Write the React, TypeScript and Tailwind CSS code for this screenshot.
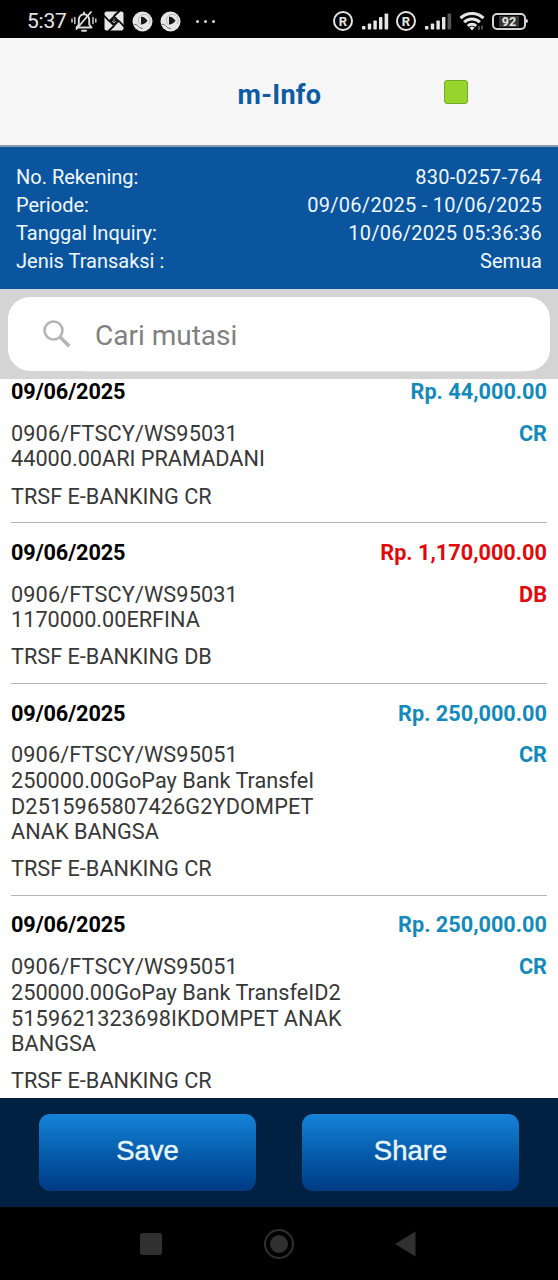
import React from "react";

type Mutasi = {
    date: string;
    amount: string;
    type: "CR" | "DB";
    lines: string[];
    note: string;
};

const info = [
    { label: "No. Rekening:", value: "830-0257-764" },
    { label: "Periode:", value: "09/06/2025 - 10/06/2025" },
    { label: "Tanggal Inquiry:", value: "10/06/2025 05:36:36" },
    { label: "Jenis Transaksi :", value: "Semua" },
];

const mutasi: Mutasi[] = [
    {
        date: "09/06/2025",
        amount: "Rp. 44,000.00",
        type: "CR",
        lines: ["0906/FTSCY/WS95031", "44000.00ARI PRAMADANI"],
        note: "TRSF E-BANKING CR",
    },
    {
        date: "09/06/2025",
        amount: "Rp. 1,170,000.00",
        type: "DB",
        lines: ["0906/FTSCY/WS95031", "1170000.00ERFINA"],
        note: "TRSF E-BANKING DB",
    },
    {
        date: "09/06/2025",
        amount: "Rp. 250,000.00",
        type: "CR",
        lines: ["0906/FTSCY/WS95051", "250000.00GoPay Bank TransfeI", "D2515965807426G2YDOMPET", "ANAK BANGSA"],
        note: "TRSF E-BANKING CR",
    },
    {
        date: "09/06/2025",
        amount: "Rp. 250,000.00",
        type: "CR",
        lines: ["0906/FTSCY/WS95051", "250000.00GoPay Bank TransfeID2", "5159621323698IKDOMPET ANAK", "BANGSA"],
        note: "TRSF E-BANKING CR",
    },
];

const Registered = () => (
    <span className="flex h-5 w-5 items-center justify-center rounded-full border-2 border-[#e6e6e6] text-[13px] leading-none font-bold">
        R
    </span>
);

const Signal = ({ weak = false }: { weak?: boolean }) => (
    <svg width="27" height="17" viewBox="0 0 27 17" fill="#e6e6e6">
        <rect x="0" y="13" width="3.4" height="3.5" rx="0.8" />
        <rect x="5.8" y="10.5" width="3.4" height="6" rx="0.8" />
        <rect x="11.4" y="7.5" width="3.4" height="9" rx="0.8" />
        <rect x="17" y="4" width="3.4" height="12.5" rx="0.8" />
        <rect x="22.6" y="0.5" width="3.6" height="16" rx="0.8" fill={weak ? "#555" : "#e6e6e6"} />
    </svg>
);

const Player = () => (
    <svg width="21" height="21" viewBox="0 0 21 21">
        <circle cx="10.5" cy="10.5" r="10" fill="#e6e6e6" />
        <path d="M8 13.5A6 6 0 1 1 17 13" fill="none" stroke="#aaa" strokeWidth="0.8" />
        <path d="M9 5.8q3-.8 6.5 3.9-3 4-6.5 3.8z" fill="#161616" />
        <path d="M1.5 13.5q3-1 4.5 1.5t5 2.5" fill="none" stroke="#777" strokeWidth="1" />
    </svg>
);

// status bar
const StatusBar = () => (
    <div className="flex h-[38px] items-center bg-black pt-1 pr-[30px] pl-[27px] text-[#e6e6e6]">
        <span className="w-[44px] text-[21px] leading-none tracking-[-0.2px]">5:37</span>
        <svg width="26" height="23" viewBox="0 0 26 23" fill="none" stroke="#dcdcdc" strokeWidth="1.9" strokeLinecap="round">
            <path d="M5.5 17.5h15l-2.3-3V9.5a5.2 5.2 0 0 0-10.4 0v5z" strokeLinejoin="round" />
            <path d="M13 4V2.5M11 20.8h4M20 2 5.5 19" />
            <path d="M3.8 7.5v6M1 9v3M22 7.5v6M24.8 9v3" strokeWidth="1.4" />
        </svg>
        <svg className="ml-[7px]" width="20" height="20" viewBox="0 0 20 20">
            <rect x="0.5" y="0.5" width="19" height="19" rx="2" fill="#e6e6e6" />
            <path d="M0 4.5 5 10M4.5 20 10 15M20 15.5 15 10M15.5 0 10 5" stroke="#000" strokeWidth="1.8" />
            <path d="m10 4.2 5.8 5.8-5.8 5.8L4.2 10z" fill="#111" />
            <path d="M10 7.5v4M8 10l2 2 2-2" stroke="#999" fill="none" />
        </svg>
        <div className="ml-2 flex gap-[7px]">
            <Player />
            <Player />
        </div>
        <div className="ml-[15px] flex gap-[5px]">
            <i className="h-[3px] w-[3px] rounded-full bg-[#dcdcdc]" />
            <i className="h-[3px] w-[3px] rounded-full bg-[#dcdcdc]" />
            <i className="h-[3px] w-[3px] rounded-full bg-[#dcdcdc]" />
        </div>
        <div className="ml-auto flex items-center">
            <Registered />
            <span className="mr-[7px] ml-[9px]"><Signal /></span>
            <Registered />
            <span className="mr-[7px] ml-[9px]"><Signal weak /></span>
            <svg width="26" height="20" viewBox="0 0 26 20" fill="none" stroke="#e6e6e6" strokeWidth="3">
                <path d="M1.5 7.2a16.5 16.5 0 0 1 23 0" />
                <path d="M5.2 11.2a11 11 0 0 1 15.6 0" />
                <path d="M8.8 15a6 6 0 0 1 8.4 0" />
                <path d="M10.5 16.7 13 19.5l2.5-2.8a3.6 3.6 0 0 0-5 0z" fill="#e6e6e6" stroke="none" />
                <path d="M20 15v4M23 14.5v4" stroke="#777" strokeWidth="1.3" />
            </svg>
            <span className="ml-[7px] flex h-[17px] w-[34px] items-center justify-center rounded-[5px] border-2 border-[#d4d4d4]">
                <b className="bg-[#353535] px-[3px] text-[12.5px] leading-[11px] font-bold">92</b>
            </span>
            <i className="h-1 w-[2px] rounded-r bg-[#d4d4d4]" />
        </div>
    </div>
);

// one transaction
const Row = ({ item }: { item: Mutasi }) => {
    const color = item.type === "CR" ? "text-[#138abb]" : "text-[#e2090c]";

    return (
        <div className="mx-[11px] mb-[16.4px] border-b border-[#b4b4b4] pb-[13.1px] text-[21.7px] leading-[25.6px] last:mb-0 last:border-0 last:pb-0">
            <div className="flex justify-between font-bold">
                <span className="tracking-[-0.13px] text-black">{item.date}</span>
                <span className={color}>{item.amount}</span>
            </div>
            <div className="mt-[16.3px] flex justify-between">
                <div className="text-[#383838]">
                    {item.lines.map((line) => (
                        <p key={line} className="whitespace-nowrap odd:tracking-[0.12px]">{line}</p>
                    ))}
                </div>
                <span className={`font-bold ${color}`}>{item.type}</span>
            </div>
            <p className="mt-[11.6px] text-[#383838]">{item.note}</p>
        </div>
    );
};

const App = () => {
    return (
        <div className="flex h-[1280px] w-[558px] flex-col overflow-hidden bg-white font-['Roboto',sans-serif]">
            <StatusBar />

            {/* header */}
            <header className="grid h-[109px] grid-cols-[1fr_auto_1fr] items-center border-b-2 border-[#8a9bb0] bg-[#f6f6f6]">
                <h1 className="col-start-2 pt-[7px] pl-px text-[27px] font-bold tracking-[0.3px] text-[#0d5ca3]">m-Info</h1>
                <i className="ml-[123px] h-6 w-6 rounded-[3px] border border-[#76a72c] bg-[#96d52b]" />
            </header>

            {/* account info */}
            <section className="h-[142px] bg-[#0b559f] px-4 pt-4 text-[20px] leading-7 text-[#f0f8ff]">
                {info.map((row) => (
                    <div key={row.label} className="group flex justify-between">
                        <span>{row.label}</span>
                        <span className="tracking-[0.28px] group-last:tracking-normal">{row.value}</span>
                    </div>
                ))}
            </section>

            {/* search */}
            <section className="h-[90px] bg-[#d4d4d4] px-2 pt-2">
                <div className="flex h-[74px] items-center rounded-[22px] bg-white pl-[35px]">
                    <svg width="28" height="28" viewBox="0 0 28 28" fill="none" stroke="#b5b5b5" strokeWidth="2.6">
                        <circle cx="10.5" cy="10.5" r="9" />
                        <path d="m16.8 16.8 9.5 9.5" strokeWidth="3.6" />
                    </svg>
                    <span className="ml-6 pt-[3px] text-[28px] text-[#808080]">Cari mutasi</span>
                </div>
                <div className="mr-6 ml-[74px] h-px bg-[#e4e4e4]" />
            </section>

            <main className="min-h-0 flex-1 overflow-hidden">
                {mutasi.map((item, i) => (
                    <Row key={i} item={item} />
                ))}
            </main>

            {/* actions */}
            <footer className="flex h-[109px] gap-[46px] bg-[#002142] px-[39px] pt-4 font-['Liberation_Sans',sans-serif] text-[27.5px] text-[#e8f7ff]">
                <button className="h-[77px] flex-1 rounded-[11px] bg-linear-to-b from-[#1683d8] to-[#003a84] pb-[3px] [-webkit-text-stroke:0.4px]">Save</button>
                <button className="h-[77px] flex-1 rounded-[11px] bg-linear-to-b from-[#1683d8] to-[#003a84] pb-[3px] [-webkit-text-stroke:0.4px]">Share</button>
            </footer>

            {/* android navigation */}
            <nav className="flex h-[73px] items-center bg-black pl-[140px]">
                <i className="h-[22px] w-[22px] rounded-[3px] bg-[#303030]" />
                <svg className="ml-[102px]" width="30" height="30" viewBox="0 0 30 30">
                    <circle cx="15" cy="15" r="14" fill="none" stroke="#303030" strokeWidth="2" />
                    <circle cx="15" cy="15" r="9" fill="#303030" />
                </svg>
                <svg className="ml-[101px]" width="21" height="26" viewBox="0 0 21 26">
                    <path d="M20.5.5v25L0 13z" fill="#303030" />
                </svg>
            </nav>
        </div>
    );
};

export default App;
